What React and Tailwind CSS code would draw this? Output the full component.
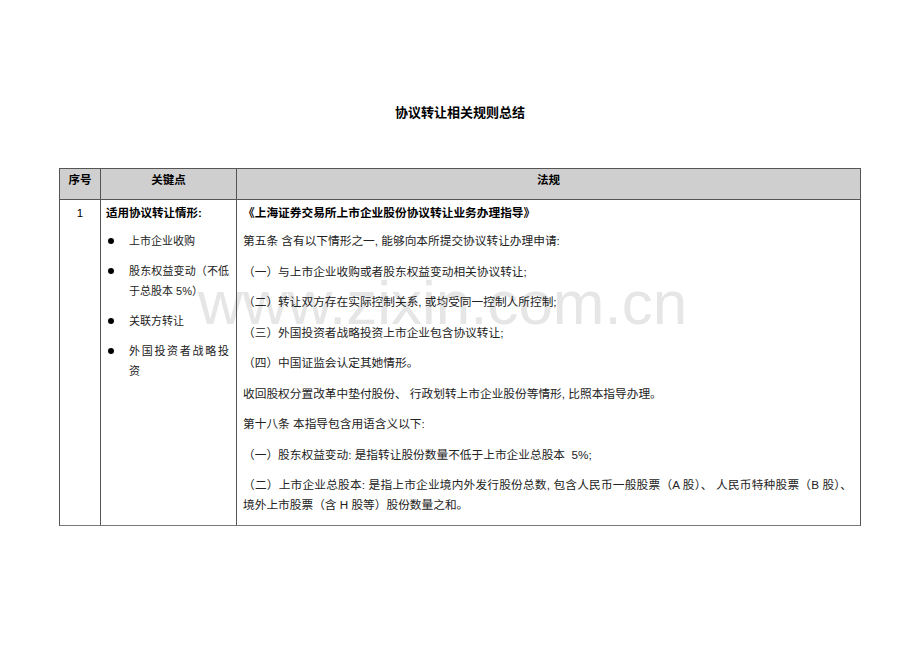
const justLine = (s) => (
  <span className="flex justify-between">
    {s.split("").map((c, i) => (
      <span key={i}>{c}</span>
    ))}
  </span>
);

const Bullet = ({ children }) => (
  <div className="flex mb-[10px]">
    <span className="w-[23px] h-[20px] flex items-center shrink-0">
      <span className="ml-[2px] w-[6px] h-[6px] rounded-full bg-black" />
    </span>
    <div className="w-[100px]">{children}</div>
  </div>
);

const rules = [
  "第五条 含有以下情形之一, 能够向本所提交协议转让办理申请:",
  "（一）与上市企业收购或者股东权益变动相关协议转让;",
  "（二）转让双方存在实际控制关系, 或均受同一控制人所控制;",
  "（三）外国投资者战略投资上市企业包含协议转让;",
  "（四）中国证监会认定其她情形。",
  "收回股权分置改革中垫付股份、 行政划转上市企业股份等情形, 比照本指导办理。",
  "第十八条 本指导包含用语含义以下:",
  "（一）股东权益变动: 是指转让股份数量不低于上市企业总股本  5%;",
];

export default function App() {
  return (
    <div className="relative min-h-[651px] bg-white font-['Liberation_Sans','Noto_Sans_CJK_SC',sans-serif] text-[#222]">
      <div className="absolute left-[198px] top-[272px] pointer-events-none select-none text-[62px] leading-none text-[#e6e6e6] font-['Liberation_Sans',sans-serif] whitespace-nowrap">
        www.zixin.com.cn
      </div>

      <div className="relative pt-[103px]">
        <h1 className="text-center text-[13px] leading-[20px] font-bold text-black">
          协议转让相关规则总结
        </h1>

        <div className="mx-auto mt-[45px] w-[802px] border border-[#555] border-b-[#777]">
          <div className="grid grid-cols-[40px_136px_1fr] bg-[#cfcfcf] border-b border-[#555] h-[31px] text-[11.5px] font-bold text-black leading-[14px]">
            <div className="text-center pt-[4px]">序号</div>
            <div className="text-center pt-[4px] border-l border-[#555]">关键点</div>
            <div className="text-center pt-[4px] border-l border-[#555]">法规</div>
          </div>

          <div className="grid grid-cols-[40px_136px_1fr] text-[11.5px] leading-[20px]">
            <div className="text-center pt-[3px] text-black">1</div>

            <div className="border-l border-[#555] pt-[3px] pl-[5px] pr-[6px]">
              <p className="font-bold text-black mb-[8px]">适用协议转让情形:</p>
              <div className="text-[11px]">
                <Bullet>上市企业收购</Bullet>
                <Bullet>
                  {justLine("股东权益变动（不低")}
                  <span className="block">于总股本 5%）</span>
                </Bullet>
                <Bullet>关联方转让</Bullet>
                <Bullet>
                  {justLine("外国投资者战略投")}
                  <span className="block">资</span>
                </Bullet>
              </div>
            </div>

            <div className="border-l border-[#555] pt-[3px] pl-[6px] pr-[8px] pb-[10px] text-[11.7px]">
              <p className="font-bold text-black mb-[8px]">
                《上海证券交易所上市企业股份协议转让业务办理指导》
              </p>
              {rules.map((r, i) => (
                <p key={i} className="mb-[10.5px] whitespace-pre-wrap">
                  {r}
                </p>
              ))}
              <p className="text-justify">
                （二）上市企业总股本: 是指上市企业境内外发行股份总数, 包含人民币一般股票（A 股）、 人民币特种股票（B 股）、境外上市股票（含 H 股等）股份数量之和。
              </p>
            </div>
          </div>
        </div>
      </div>
    </div>
  );
}
